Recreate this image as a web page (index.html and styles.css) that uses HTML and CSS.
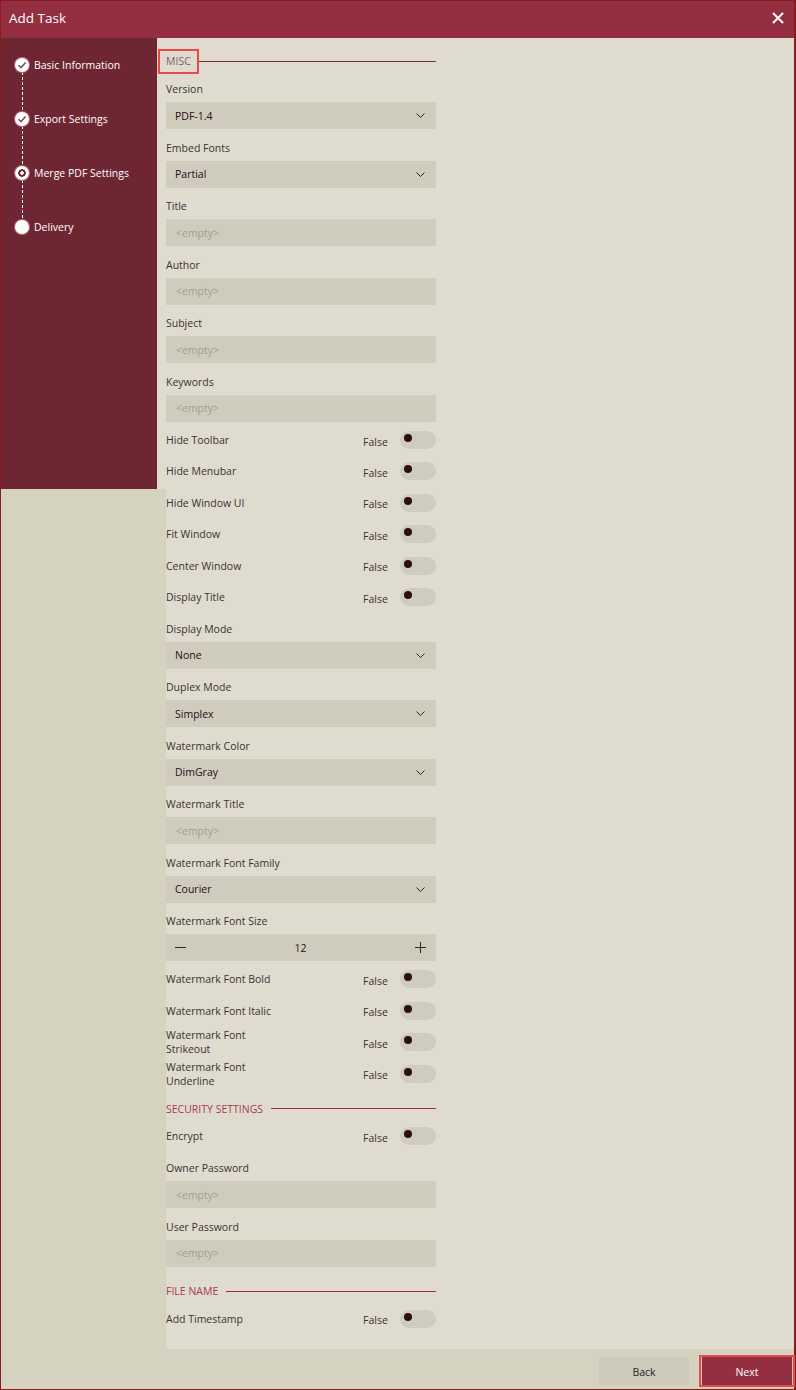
FILE: index.html
```html
<!DOCTYPE html>
<html lang="en">
<head>
    <meta charset="UTF-8">
    <meta name="viewport" content="width=device-width, initial-scale=1.0">
    <title>Add Task</title>
    <link rel="stylesheet" href="styles.css">
</head>
<body>
<div class="window">
    <header class="titlebar">
        <span class="titlebar-text">Add Task</span>
        <button class="close-btn" aria-label="Close">
            <svg width="12" height="12" viewBox="0 0 12 12"><path d="M1 1L11 11M11 1L1 11" stroke="#fff" stroke-width="2"/></svg>
        </button>
    </header>

    <div class="main">
        <aside class="side">
            <ol class="steps">
                <li class="step done">
                    <span class="dot"><svg width="10" height="10" viewBox="0 0 10 10"><path d="M1.5 5.2L4 7.6L8.6 2.6" fill="none" stroke="#7e4c58" stroke-width="1.5"/></svg></span>
                    <span>Basic Information</span>
                </li>
                <li class="link"></li>
                <li class="step done">
                    <span class="dot"><svg width="10" height="10" viewBox="0 0 10 10"><path d="M1.5 5.2L4 7.6L8.6 2.6" fill="none" stroke="#7e4c58" stroke-width="1.5"/></svg></span>
                    <span>Export Settings</span>
                </li>
                <li class="link"></li>
                <li class="step active">
                    <span class="dot"></span>
                    <span>Merge PDF Settings</span>
                </li>
                <li class="link"></li>
                <li class="step">
                    <span class="dot"></span>
                    <span>Delivery</span>
                </li>
            </ol>
        </aside>

        <section class="content">
            <div class="form">
                <div class="section-head first">
                    <span class="section-title focused">MISC</span>
                    <span class="section-line dark"></span>
                </div>

                <label class="field-label">Version</label>
                <div class="select"><span>PDF-1.4</span><svg class="chev" width="9" height="5" viewBox="0 0 9 5"><path d="M0.5 0.5l4 4 4-4" fill="none" stroke="#2b2326" stroke-width="1"/></svg></div>

                <label class="field-label">Embed Fonts</label>
                <div class="select"><span>Partial</span><svg class="chev" width="9" height="5" viewBox="0 0 9 5"><path d="M0.5 0.5l4 4 4-4" fill="none" stroke="#2b2326" stroke-width="1"/></svg></div>

                <label class="field-label">Title</label>
                <input class="text-input" type="text" placeholder="<empty>">

                <label class="field-label">Author</label>
                <input class="text-input" type="text" placeholder="<empty>">

                <label class="field-label">Subject</label>
                <input class="text-input" type="text" placeholder="<empty>">

                <label class="field-label">Keywords</label>
                <input class="text-input" type="text" placeholder="<empty>">

                <div class="toggle-row"><span class="toggle-label">Hide Toolbar</span><span class="toggle-value">False</span><span class="toggle"></span></div>
                <div class="toggle-row"><span class="toggle-label">Hide Menubar</span><span class="toggle-value">False</span><span class="toggle"></span></div>
                <div class="toggle-row"><span class="toggle-label">Hide Window UI</span><span class="toggle-value">False</span><span class="toggle"></span></div>
                <div class="toggle-row"><span class="toggle-label">Fit Window</span><span class="toggle-value">False</span><span class="toggle"></span></div>
                <div class="toggle-row"><span class="toggle-label">Center Window</span><span class="toggle-value">False</span><span class="toggle"></span></div>
                <div class="toggle-row"><span class="toggle-label">Display Title</span><span class="toggle-value">False</span><span class="toggle"></span></div>

                <label class="field-label">Display Mode</label>
                <div class="select"><span>None</span><svg class="chev" width="9" height="5" viewBox="0 0 9 5"><path d="M0.5 0.5l4 4 4-4" fill="none" stroke="#2b2326" stroke-width="1"/></svg></div>

                <label class="field-label">Duplex Mode</label>
                <div class="select"><span>Simplex</span><svg class="chev" width="9" height="5" viewBox="0 0 9 5"><path d="M0.5 0.5l4 4 4-4" fill="none" stroke="#2b2326" stroke-width="1"/></svg></div>

                <label class="field-label">Watermark Color</label>
                <div class="select"><span>DimGray</span><svg class="chev" width="9" height="5" viewBox="0 0 9 5"><path d="M0.5 0.5l4 4 4-4" fill="none" stroke="#2b2326" stroke-width="1"/></svg></div>

                <label class="field-label">Watermark Title</label>
                <input class="text-input" type="text" placeholder="<empty>">

                <label class="field-label">Watermark Font Family</label>
                <div class="select"><span>Courier</span><svg class="chev" width="9" height="5" viewBox="0 0 9 5"><path d="M0.5 0.5l4 4 4-4" fill="none" stroke="#2b2326" stroke-width="1"/></svg></div>

                <label class="field-label">Watermark Font Size</label>
                <div class="number">
                    <svg width="11" height="11" viewBox="0 0 11 11"><path d="M0 5.5H11" stroke="#2b2326" stroke-width="1"/></svg>
                    <span>12</span>
                    <svg width="11" height="11" viewBox="0 0 11 11"><path d="M0 5.5H11M5.5 0V11" stroke="#2b2326" stroke-width="1"/></svg>
                </div>

                <div class="toggle-row"><span class="toggle-label">Watermark Font Bold</span><span class="toggle-value">False</span><span class="toggle"></span></div>
                <div class="toggle-row"><span class="toggle-label">Watermark Font Italic</span><span class="toggle-value">False</span><span class="toggle"></span></div>
                <div class="toggle-row"><span class="toggle-label">Watermark Font Strikeout</span><span class="toggle-value">False</span><span class="toggle"></span></div>
                <div class="toggle-row"><span class="toggle-label">Watermark Font Underline</span><span class="toggle-value">False</span><span class="toggle"></span></div>

                <div class="section-head">
                    <span class="section-title">SECURITY SETTINGS</span>
                    <span class="section-line"></span>
                </div>

                <div class="toggle-row"><span class="toggle-label">Encrypt</span><span class="toggle-value">False</span><span class="toggle"></span></div>

                <label class="field-label">Owner Password</label>
                <input class="text-input" type="password" placeholder="<empty>">

                <label class="field-label">User Password</label>
                <input class="text-input" type="password" placeholder="<empty>">

                <div class="section-head">
                    <span class="section-title">FILE NAME</span>
                    <span class="section-line"></span>
                </div>

                <div class="toggle-row"><span class="toggle-label">Add Timestamp</span><span class="toggle-value">False</span><span class="toggle"></span></div>
            </div>
        </section>
    </div>

    <footer class="footer">
        <button class="btn btn-back">Back</button>
        <button class="btn btn-next">Next</button>
    </footer>
</div>
</body>
</html>
```

FILE: styles.css
```css
* {
    box-sizing: border-box;
}

body {
    margin: 0;
    font-family: "Open Sans", "Noto Sans", sans-serif;
    font-size: 10.5px;
    color: #3a3233;
}

/* Janela inteira */
.window {
    width: 796px;
    height: 1390px;
    border: 1px solid #8b1a1a;
    border-right-width: 2px;
    display: flex;
    flex-direction: column;
    background-color: #d5d2c0;
}

.titlebar {
    height: 37px;
    flex-shrink: 0;
    background-color: #932f40;
    display: flex;
    align-items: center;
    justify-content: space-between;
    padding: 0 10px 3px 8px;
}

.titlebar-text {
    color: #fff;
    font-size: 13.5px;
}

.close-btn {
    border: none;
    background: none;
    padding: 0;
    display: flex;
}

.main {
    flex: 1;
    display: flex;
    min-height: 0;
}

/* Coluna da esquerda */
.side {
    width: 165px;
    flex-shrink: 0;
    background-color: #d5d2c0;
}

.steps {
    list-style: none;
    margin: 0;
    width: 165px;
    height: 451px;
    padding: 20px 0 0 14px;
    background-color: #6e2633;
    border-right: 9px solid #dfdccf;
}

.step {
    display: flex;
    align-items: center;
    gap: 5px;
    height: 14px;
    color: #fff;
}

.dot {
    width: 14px;
    height: 14px;
    border-radius: 50%;
    background-color: #fff;
    box-shadow: 0 0 0 1px #b8697a;
    display: flex;
    align-items: center;
    justify-content: center;
    flex-shrink: 0;
}

.step.active .dot {
    background: radial-gradient(circle, #fff 0 1.5px, #6e2633 2px 3.5px, #fff 4px);
}

.link {
    width: 1px;
    height: 40px;
    margin-left: 7px;
    background: repeating-linear-gradient(to bottom, #fff 0 3px, transparent 3px 5px);
}

/* Area do formulario */
.content {
    flex: 1;
    background-color: #dfdccf;
    padding: 4px 0 16px 0;
    align-self: stretch;
}

.form {
    width: 270px;
    display: flex;
    flex-direction: column;
}

.section-head {
    height: 31.4px;
    display: flex;
    align-items: center;
    padding-top: 8px;
}

.select + .section-head,
.text-input + .section-head {
    margin-top: 2.5px;
}

.section-title {
    color: #a83a50;
    padding: 4px 6px;
    margin-left: -8px;
    border: 2px solid transparent;
    line-height: 13px;
}

.section-title.focused {
    color: #8a5662;
    border-color: #e84a4a;
}

.section-line {
    flex: 1;
    height: 1px;
    background-color: #a82a3e;
}

.section-line.dark {
    background-color: #7e2b38;
}

.field-label {
    display: block;
    line-height: 16px;
    padding: 8px 0 5px 0;
}

.select,
.text-input,
.number {
    height: 27px;
    margin-bottom: 2.5px;
    background-color: #cfccbd;
    border: none;
    width: 100%;
}

.select {
    display: flex;
    align-items: center;
    justify-content: space-between;
    padding: 0 11px 0 9px;
    color: #2b0a12;
}

.text-input {
    font-family: inherit;
    font-size: 10.5px;
    padding: 0 10px;
    outline: none;
    color: #2b0a12;
}

.text-input::placeholder {
    color: #a29e91;
}

.number {
    display: flex;
    align-items: center;
    justify-content: space-between;
    padding: 0 10px 0 9px;
    color: #2b0a12;
}

/* Linhas com interruptor */
.toggle-row {
    height: 31.4px;
    display: flex;
    align-items: center;
}

.toggle-label {
    max-width: 112px;
    line-height: 14px;
}

.toggle-value {
    margin-left: auto;
    margin-top: 3px;
    width: 37px;
}

.toggle {
    width: 36px;
    height: 18px;
    border-radius: 9px;
    background-color: #cfccbf;
    padding: 3px 0 0 4px;
}

.toggle::before {
    content: "";
    display: block;
    width: 8px;
    height: 8px;
    border-radius: 50%;
    background-color: #2b0d14;
}

/* Rodape */
.footer {
    height: 40px;
    flex-shrink: 0;
    display: flex;
    justify-content: flex-end;
    align-items: flex-start;
    gap: 12px;
    padding: 8px 1px 0 0;
    background-color: #d5d2c0;
}

.btn {
    font-family: inherit;
    font-size: 10.5px;
    border: none;
    height: 28px;
    padding-top: 2px;
}

.btn-back {
    width: 90px;
    background-color: #cdcab9;
    color: #2b2326;
}

.btn-next {
    width: 92px;
    background-color: #932f40;
    color: #fff;
    outline: 2px solid #e84a4a;
    box-shadow: inset 1px 0 0 #d0c8c0, inset -1px 0 0 #d0c8c0;
}
```
